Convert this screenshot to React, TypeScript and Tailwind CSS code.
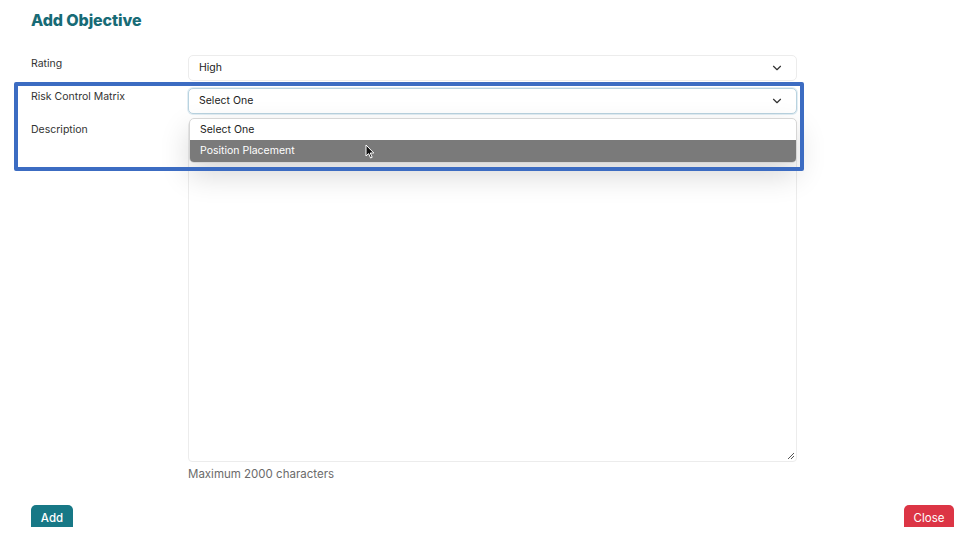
import { ChevronDown } from "lucide-react";

const font = { fontFamily: "Inter, 'Noto Sans', sans-serif" };

function SelectBox({ value, focused }: { value: string; focused?: boolean }) {
  return (
    <div
      className={
        "flex h-[26px] w-[609px] items-center justify-between rounded-[5px] border bg-white pl-[10px] pr-[12px] text-[10.5px] text-[#222]" +
        (focused ? " border-[#b9d3e0] shadow-[0_0_0_1px_#e3eef4]" : " border-[#ececec]")
      }
    >
      <span>{value}</span>
      <ChevronDown className="size-[14px] text-[#333]" strokeWidth={2} />
    </div>
  );
}

function Cursor() {
  return (
    <svg width="11" height="15" viewBox="0 0 11 15" className="absolute left-[365px] top-[144px]">
      <path d="M1 1 L1 12 L3.6 9.6 L5.6 14 L7.2 13.3 L5.3 9 L8.8 9 Z" fill="#111" stroke="#fff" strokeWidth="1" />
    </svg>
  );
}

export default function App() {
  return (
    <div className="relative h-[544px] w-[965px] overflow-hidden bg-white" style={font}>
      <div className="px-[31px] pt-[8px]">
        <h1 className="text-[16px] font-extrabold tracking-[-0.1px] text-[#176b76]">Add Objective</h1>

        <div className="mt-[23px] flex flex-col gap-[7px]">
          <div className="flex">
            <label className="w-[157px] pt-[1px] text-[10.5px] text-[#333]">Rating</label>
            <SelectBox value="High" />
          </div>
          <div className="flex">
            <label className="w-[157px] pt-[1px] text-[10.5px] text-[#333]">Risk Control Matrix</label>
            <SelectBox value="Select One" focused />
          </div>
          <div className="flex">
            <label className="w-[157px] pt-[1px] text-[10.5px] text-[#333]">Description</label>
            <div className="flex flex-col">
              <div className="relative h-[341px] w-[609px] rounded-[4px] border border-[#ececec] bg-white">
                <svg width="8" height="8" viewBox="0 0 8 8" className="absolute bottom-[1px] right-[1px]">
                  <path d="M7 1 L1 7 M7 4 L4 7" stroke="#555" strokeWidth="1" />
                </svg>
              </div>
              <p className="mt-[4px] text-[11.5px] text-[#6b6b6b]">Maximum 2000 characters</p>
            </div>
          </div>
        </div>
      </div>

      {/* footer, clipped at the bottom of the visible area */}
      <div className="mt-[22px] flex h-[22px] justify-between overflow-hidden pl-[31px] pr-[11px]">
        <button className="h-[44px] w-[42px] shrink-0 rounded-[5px] bg-[#177886] pb-[18px] text-[11.5px] font-medium text-white">
          Add
        </button>
        <button className="h-[44px] w-[50px] shrink-0 rounded-[5px] bg-[#dc3545] pb-[18px] text-[11.5px] text-white">
          Close
        </button>
      </div>

      {/* open dropdown list */}
      <div className="absolute left-[189px] top-[118px] w-[608px] overflow-hidden rounded-[5px] border border-[#d6d6d6] bg-white text-[10.5px] shadow-[0_12px_30px_rgba(0,0,0,0.16)]">
        <div className="flex h-[21px] items-center px-[10px] text-[#222]">Select One</div>
        <div className="flex h-[22px] items-center bg-[#7a7a7a] px-[10px] text-white">Position Placement</div>
      </div>

      {/* highlight frame */}
      <div className="pointer-events-none absolute left-[14px] top-[82px] h-[89px] w-[790px] rounded-[2px] border-[4px] border-[#3c6cc2]" />

      <Cursor />
    </div>
  );
}
